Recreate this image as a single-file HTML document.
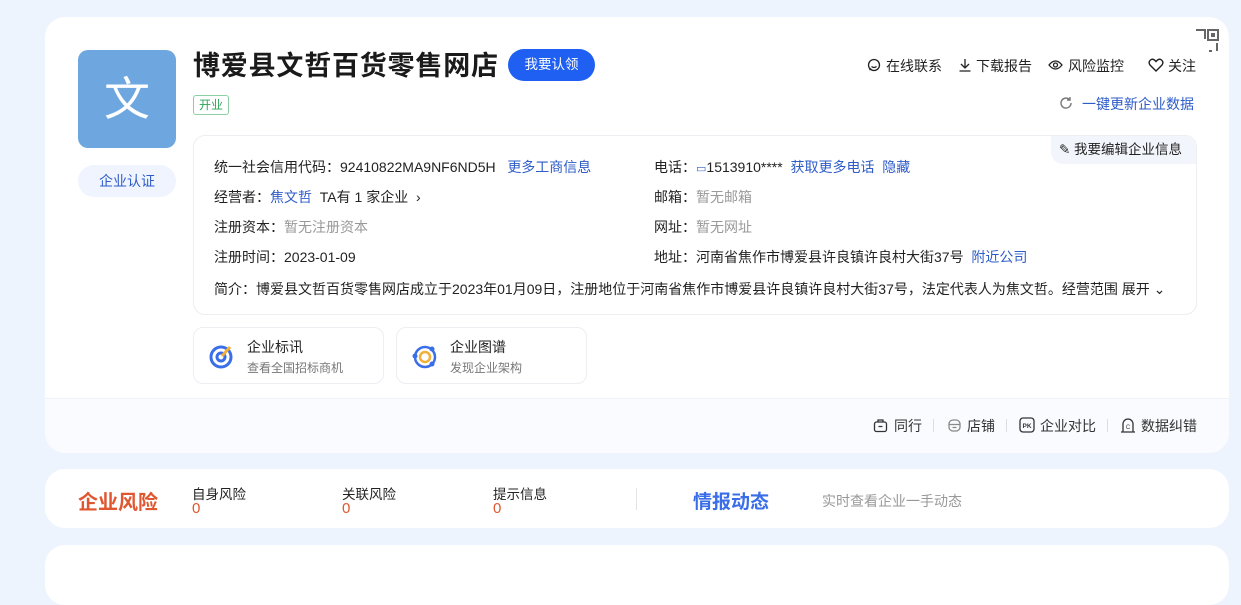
<!DOCTYPE html>
<html><head><meta charset="utf-8"><style>
*{margin:0;padding:0;box-sizing:border-box}
body{width:1241px;height:571px;overflow:hidden;background:#eef4fd;font-family:"Liberation Sans","Noto Sans CJK SC",sans-serif;color:#222;font-size:14px;position:relative}
.card{position:absolute;left:45px;width:1184px;background:#fff;border-radius:20px}
.abs{position:absolute;white-space:nowrap}
.blue{color:#2e5cc8}
.gray{color:#999}
.lab{font-size:14px}
svg.i{position:absolute}
</style></head><body>
<div class="card" style="top:17px;height:436px;overflow:hidden">
 <div style="position:absolute;left:0;right:0;top:381px;bottom:0;background:#f9fbff;border-top:1px solid #eef1f6"></div>
</div>
<svg class="abs" style="left:1195px;top:28px" width="26" height="26" viewBox="0 0 26 26"><path d="M1 2h9v9" fill="none" stroke="#666" stroke-width="2"/><rect x="13" y="2" width="10" height="10" fill="none" stroke="#666" stroke-width="2"/><rect x="16" y="5" width="4" height="4" fill="#666"/><path d="M14 23h3M22 15v8" stroke="#666" stroke-width="2"/></svg>
<div class="abs" style="left:78px;top:50px;width:98px;height:98px;background:#6ea7e0;border-radius:10px;color:#fff;font-size:46px;text-align:center;line-height:98px">文</div>
<div class="abs" style="left:78px;top:165px;width:98px;height:32px;background:#f0f4fe;border-radius:16px;color:#2e5cc8;text-align:center;line-height:32px">企业认证</div>
<div class="abs" style="left:193px;top:44px;font-size:27px;font-weight:bold;color:#1a1a1a;letter-spacing:0.8px">博爱县文哲百货零售网店</div>
<div class="abs" style="left:508px;top:49px;width:87px;height:32px;background:#1f60f2;border-radius:16px;color:#fff;text-align:center;line-height:32px;font-size:13.5px">我要认领</div>
<div class="abs" style="left:193px;top:95px;height:20px;padding:0 5px;border:1px solid #8ccfa5;border-radius:3px;color:#2fa35a;font-size:12px;line-height:18px">开业</div>
<!-- top actions -->
<svg class="i" style="left:867px;top:58px" width="14" height="14" viewBox="0 0 14 14"><circle cx="7" cy="7" r="5.5" fill="none" stroke="#222" stroke-width="1.3"/><path d="M4.5 8.5q2.5 2 5 0M2.5 12l1.5-1.5" fill="none" stroke="#222" stroke-width="1.3"/></svg>
<div class="abs lab" style="left:886px;top:56px">在线联系</div>
<svg class="i" style="left:958px;top:58px" width="14" height="14" viewBox="0 0 14 14"><path d="M7 1v9M3 6l4 4 4-4M1.5 13h11" fill="none" stroke="#222" stroke-width="1.3"/></svg>
<div class="abs lab" style="left:976px;top:56px">下载报告</div>
<svg class="i" style="left:1048px;top:58px" width="15" height="14" viewBox="0 0 15 14"><path d="M1 7q6.5-8 13 0q-6.5 8-13 0z" fill="none" stroke="#222" stroke-width="1.3"/><circle cx="7.5" cy="7" r="2" fill="none" stroke="#222" stroke-width="1.3"/></svg>
<div class="abs lab" style="left:1068px;top:56px">风险监控</div>
<svg class="i" style="left:1148px;top:58px" width="16" height="14" viewBox="0 0 16 14"><path d="M8 13L2 7Q0 4 2.5 2Q5 0 8 3.5Q11 0 13.5 2Q16 4 14 7z" fill="none" stroke="#222" stroke-width="1.4"/></svg>
<div class="abs lab" style="left:1168px;top:56px">关注</div>
<svg class="i" style="left:1059px;top:96px" width="14" height="14" viewBox="0 0 14 14"><path d="M12 7A5 5 0 1 1 10.5 3.5M11 1v3h-3" fill="none" stroke="#777" stroke-width="1.4"/></svg>
<div class="abs lab blue" style="left:1082px;top:94px">一键更新企业数据</div>
<!-- info box -->
<div class="abs" style="left:193px;top:135px;width:1004px;height:180px;border:1px solid #eceef2;border-radius:12px"></div>
<div class="abs lab" style="left:1051px;top:136px;width:145px;height:28px;background:#f2f5fb;border-radius:0 12px 0 12px;line-height:28px;padding-left:8px;font-size:13.5px">✎ 我要编辑企业信息</div>
<div class="abs lab" style="left:214px;top:157px">统一社会信用代码：92410822MA9NF6ND5H &nbsp; <span class="blue">更多工商信息</span></div>
<div class="abs lab" style="left:214px;top:187px">经营者：<span class="blue">焦文哲</span> &nbsp;TA有 1 家企业 &nbsp;›</div>
<div class="abs lab" style="left:214px;top:217px">注册资本：<span class="gray">暂无注册资本</span></div>
<div class="abs lab" style="left:214px;top:247px">注册时间：2023-01-09</div>
<div class="abs lab" style="left:654px;top:157px">电话：<span class="blue" style="font-size:11px">▭</span>1513910**** &nbsp;<span class="blue">获取更多电话 &nbsp;隐藏</span></div>
<div class="abs lab" style="left:654px;top:187px">邮箱：<span class="gray">暂无邮箱</span></div>
<div class="abs lab" style="left:654px;top:217px">网址：<span class="gray">暂无网址</span></div>
<div class="abs lab" style="left:654px;top:247px">地址：河南省焦作市博爱县许良镇许良村大街37号 &nbsp;<span class="blue">附近公司</span></div>
<div class="abs lab" style="left:214px;top:279px">简介：博爱县文哲百货零售网店成立于2023年01月09日，注册地位于河南省焦作市博爱县许良镇许良村大街37号，法定代表人为焦文哲。经营范围 展开 ⌄</div>
<!-- feature cards -->
<div class="abs" style="left:193px;top:327px;width:191px;height:57px;border:1px solid #eceef2;border-radius:10px"></div>
<div class="abs" style="left:396px;top:327px;width:191px;height:57px;border:1px solid #eceef2;border-radius:10px"></div>
<svg class="abs" style="left:208px;top:342px" width="28" height="28" viewBox="0 0 28 28"><circle cx="13" cy="15" r="10" fill="none" stroke="#3a6ee8" stroke-width="3"/><circle cx="13" cy="15" r="4" fill="none" stroke="#3a6ee8" stroke-width="3"/><path d="M14 14l8-9" stroke="#f0b03a" stroke-width="3"/></svg>
<div class="abs" style="left:247px;top:337px;font-size:14px">企业标讯</div>
<div class="abs" style="left:247px;top:359px;font-size:12px;color:#777">查看全国招标商机</div>
<svg class="abs" style="left:412px;top:342px" width="26" height="28" viewBox="0 0 26 28"><circle cx="13" cy="15" r="10" fill="none" stroke="#3a6ee8" stroke-width="2.5"/><circle cx="13" cy="15" r="5" fill="none" stroke="#f0b03a" stroke-width="2.5"/><circle cx="3" cy="14" r="2.5" fill="#3a6ee8"/><circle cx="20" cy="7" r="2.5" fill="#3a6ee8"/><circle cx="20" cy="22" r="2.5" fill="#3a6ee8"/></svg>
<div class="abs" style="left:450px;top:337px;font-size:14px">企业图谱</div>
<div class="abs" style="left:450px;top:359px;font-size:12px;color:#777">发现企业架构</div>
<!-- bottom toolbar -->
<svg class="i" style="left:873px;top:418px" width="15" height="15" viewBox="0 0 15 15"><rect x="1.5" y="4" width="12" height="9.5" rx="2" fill="none" stroke="#333" stroke-width="1.3"/><path d="M5 4V2h5v2M5.5 8.5h4" fill="none" stroke="#333" stroke-width="1.3"/></svg>
<div class="abs lab" style="left:894px;top:416px;color:#333">同行</div>
<div class="abs" style="left:933px;top:419px;width:1px;height:13px;background:#ddd"></div>
<svg class="i" style="left:947px;top:418px" width="15" height="15" viewBox="0 0 15 15"><rect x="2" y="2" width="11" height="11" rx="4" fill="none" stroke="#888" stroke-width="1.3"/><path d="M2 6.5h11M5.5 9.5h4" stroke="#888" stroke-width="1.2"/></svg>
<div class="abs lab" style="left:967px;top:416px;color:#333">店铺</div>
<div class="abs" style="left:1006px;top:419px;width:1px;height:13px;background:#ddd"></div>
<svg class="i" style="left:1019px;top:417px" width="16" height="16" viewBox="0 0 16 16"><rect x="1" y="1" width="14" height="14" rx="3" fill="none" stroke="#333" stroke-width="1.3"/><text x="8" y="11" font-size="6.5" text-anchor="middle" font-family="Liberation Sans" font-weight="bold" fill="#333">PK</text></svg>
<div class="abs lab" style="left:1040px;top:416px;color:#333">企业对比</div>
<div class="abs" style="left:1107px;top:419px;width:1px;height:13px;background:#ddd"></div>
<svg class="i" style="left:1120px;top:417px" width="16" height="16" viewBox="0 0 16 16"><path d="M3 15V7a5 5 0 0 1 10 0v8M1 15h14" fill="none" stroke="#333" stroke-width="1.3"/><text x="8" y="12" font-size="6" text-anchor="middle" font-family="Liberation Sans" fill="#333">C</text></svg>
<div class="abs lab" style="left:1141px;top:416px;color:#333">数据纠错</div>
<!-- risk card -->
<div class="card" style="top:469px;height:59px"></div>
<div class="abs" style="left:78px;top:486px;font-size:20px;font-weight:bold;color:#e0562f">企业风险</div>
<div class="abs lab" style="left:192px;top:483px;font-size:13.5px">自身风险</div><div class="abs" style="left:192px;top:500px;color:#e0562f;font-size:15px">0</div>
<div class="abs lab" style="left:342px;top:483px;font-size:13.5px">关联风险</div><div class="abs" style="left:342px;top:500px;color:#e0562f;font-size:15px">0</div>
<div class="abs lab" style="left:493px;top:483px;font-size:13.5px">提示信息</div><div class="abs" style="left:493px;top:500px;color:#e0562f;font-size:15px">0</div>
<div class="abs" style="left:636px;top:488px;width:1px;height:22px;background:#e5e5e5"></div>
<div class="abs" style="left:693px;top:487px;font-size:19px;font-weight:bold;color:#3a6ee8">情报动态</div>
<div class="abs" style="left:822px;top:491px;font-size:14px;color:#999">实时查看企业一手动态</div>
<div class="card" style="top:545px;height:60px"></div>
</body></html>
